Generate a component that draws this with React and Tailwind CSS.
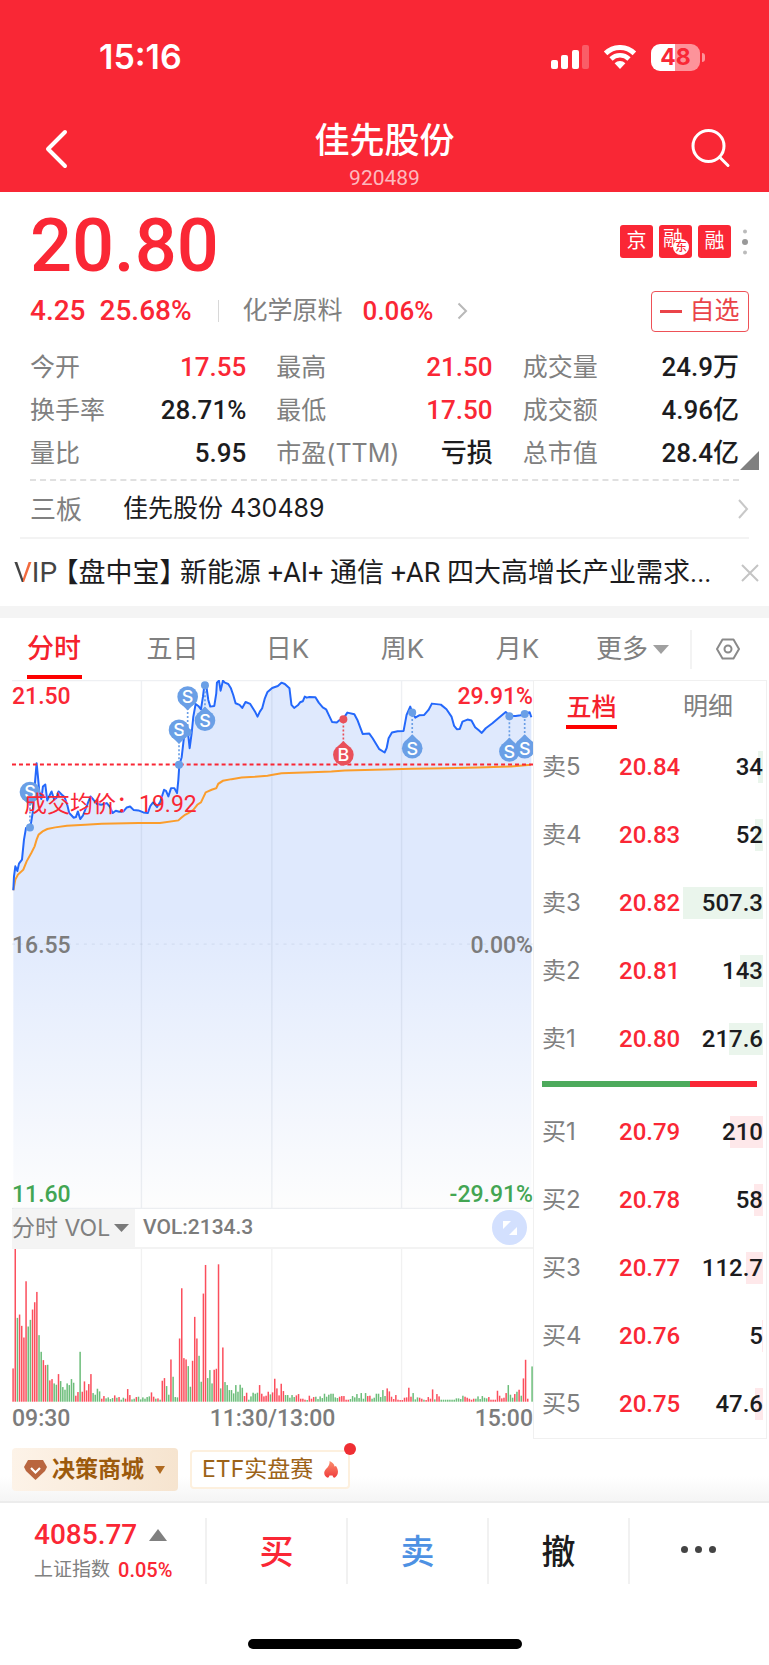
import React from "react";

const num = "font-['Roboto','Noto_Sans_CJK_SC',sans-serif] font-medium";

const stats = [
  { label: "今开", value: "17.55", color: "text-[#fa2735]" },
  { label: "最高", value: "21.50", color: "text-[#fa2735]" },
  { label: "成交量", value: "24.9万", color: "text-[#1c1c1e]" },
  { label: "换手率", value: "28.71%", color: "text-[#1c1c1e]" },
  { label: "最低", value: "17.50", color: "text-[#fa2735]" },
  { label: "成交额", value: "4.96亿", color: "text-[#1c1c1e]" },
  { label: "量比", value: "5.95", color: "text-[#1c1c1e]" },
  { label: "市盈(TTM)", value: "亏损", color: "text-[#1c1c1e]" },
  { label: "总市值", value: "28.4亿", color: "text-[#1c1c1e]" },
];

const periods = ["分时", "五日", "日K", "周K", "月K"];

const sells = [
  { label: "卖5", price: "20.84", qty: "34", bar: 5 },
  { label: "卖4", price: "20.83", qty: "52", bar: 8 },
  { label: "卖3", price: "20.82", qty: "507.3", bar: 80 },
  { label: "卖2", price: "20.81", qty: "143", bar: 23 },
  { label: "卖1", price: "20.80", qty: "217.6", bar: 34 },
];

const buys = [
  { label: "买1", price: "20.79", qty: "210", bar: 33 },
  { label: "买2", price: "20.78", qty: "58", bar: 9 },
  { label: "买3", price: "20.77", qty: "112.7", bar: 17 },
  { label: "买4", price: "20.76", qty: "5", bar: 1 },
  { label: "买5", price: "20.75", qty: "47.6", bar: 8 },
];

const priceLine =
  "4,632 6,590 10,560 16,574 21,552 30,540 36,480 42,445 55,443 62,400 68,320 74,250 78,290 82,335 88,358 93,320 100,314 106,362 114,345 119,335 127,360 133,355 140,335 150,345 158,352 166,375 172,400 180,408 185,414 192,412 198,395 205,418 213,408 222,385 230,365 236,350 245,360 255,372 268,375 285,370 295,382 302,400 312,393 322,396 335,395 345,383 355,380 366,391 380,392 395,398 408,400 416,378 424,368 436,382 446,365 457,330 463,333 470,350 478,325 488,325 496,340 500,300 503,255 510,232 516,180 520,150 528,150 534,205 540,160 545,110 552,72 560,78 568,88 574,50 578,18 584,18 590,60 596,80 608,78 614,40 616,8 622,2 627,32 634,2 640,8 650,12 658,25 665,45 672,70 684,75 692,84 702,66 716,72 726,88 732,98 738,110 745,95 752,85 760,55 768,36 782,24 799,18 810,8 820,12 834,25 840,75 848,84 859,76 866,67 874,64 880,50 886,53 894,51 912,52 922,68 934,82 944,88 952,105 962,126 976,128 984,121 996,116 1008,98 1029,103 1039,122 1054,162 1074,161 1084,175 1104,208 1120,218 1126,205 1132,175 1142,158 1159,154 1177,153 1186,105 1197,80 1204,100 1212,113 1224,106 1239,105 1252,90 1262,71 1289,74 1306,88 1321,110 1329,138 1337,148 1346,147 1354,125 1369,119 1381,122 1392,142 1404,152 1412,159 1424,145 1444,130 1459,117 1484,96 1496,108 1514,108 1529,106 1541,102 1556,97 1561,112";

const averageLine =
  "4,632 10,600 18,585 34,570 44,545 58,520 68,500 74,480 80,465 92,455 106,448 130,443 165,438 220,435 270,432 380,430 445,430 500,422 508,415 520,405 530,400 545,390 557,375 568,368 574,355 582,338 600,330 614,325 620,312 634,303 660,298 690,293 730,291 768,288 784,285 810,280 900,277 960,275 1000,272 1120,269 1200,267 1300,265 1400,263 1500,260 1560,255";

// y is the badge, dot is the trade on the price line
const trades = [
  { type: "S", x: 54, y: 337, dot: 443 },
  { type: "S", x: 502, y: 150, dot: 255 },
  { type: "S", x: 528, y: 50, dot: 157 },
  { type: "S", x: 580, y: 122, dot: 16 },
  { type: "B", x: 996, y: 225, dot: 118 },
  { type: "S", x: 1203, y: 205, dot: 98 },
  { type: "S", x: 1495, y: 215, dot: 109 },
  { type: "S", x: 1541, y: 205, dot: 102 },
];

// one entry per minute, negative means the price fell
const volumes = [
  100, 459, -252, 262, 228, 193, 362, -226, -246, 277, 299, 330, -200, -150,
  125, 110, -111, 64, 68, -55, -51, 83, -62, -44, -36, -55, -50, -68, -57, 18,
  29, -150, 30, 61, 34, 53, 83, -26, -21, -39, -31, 9, 17, -10, -13, -8, -11,
  19, -12, 14, -6, -12, 9, 38, 20, -7, -9, 14, -15, -7, -13, -9, -14, -16, 28,
  15, -9, 10, -6, 63, 71, -47, -21, 127, -75, -14, -13, 190, 341, 131, 127,
  -107, -45, 123, 255, 190, -138, -60, 325, 411, -71, -95, -55, 96, 99, 413,
  -40, 163, -59, -50, -35, -35, -25, -50, -30, -51, -42, 17, 27, -6, -16, -27,
  -24, -27, 50, 24, 16, 18, 30, -22, 28, 69, 40, 19, 54, 32, -20, -20, -12,
  -20, -14, 19, 23, 9, 9, 6, -5, 18, 9, 14, -15, -8, -16, -11, -24, -15, -21,
  -24, -24, -13, -11, 15, 17, 17, 6, 6, -8, -17, -13, -23, -11, -26, -9, -26,
  17, 18, -9, -12, -24, -24, -14, -35, -17, 40, 31, 15, 8, 20, 6, 5, 5, 12, 13,
  42, 15, -26, -7, -13, 12, 9, -6, 5, 14, 9, 37, -7, 23, 16, -6, -6, -6, -6,
  -6, -6, -6, -10, -10, -8, -18, 15, 12, 9, 6, 9, -9, -16, -8, -17, -12, -10,
  14, 6, 6, 6, 33, 18, 10, 12, 26, -50, -21, -12, 23, -30, 36, -18, 70, 126, 9,
  0, -106,
];

const StatusBar = () => (
  <div className="flex items-center justify-between pt-[36px] pl-[99px] pr-[64px]">
    <span className="text-[34px] leading-[42px] font-semibold">15:16</span>
    <div className="flex items-center gap-[14px]">
      <svg width="38" height="24" viewBox="0 0 38 24" fill="#fff">
        <rect x="0" y="15" width="7" height="9" rx="2" />
        <rect x="10" y="10" width="7" height="14" rx="2" />
        <rect x="21" y="5" width="7" height="19" rx="2" />
        <rect x="31" y="0" width="7" height="24" rx="2" opacity="0.25" />
      </svg>
      <svg width="34" height="24" viewBox="0 0 34 24" fill="none">
        <path
          d="M2.6 8.4a20.5 20.5 0 0 1 28.8 0"
          stroke="#fff"
          strokeWidth="5"
        />
        <path
          d="M8 14a12.8 12.8 0 0 1 18 0"
          stroke="#fff"
          strokeWidth="4.6"
        />
        <path d="M11.6 18.2a7.6 7.6 0 0 1 10.8 0L17 24z" fill="#fff" />
      </svg>
      <div className="flex items-center gap-[2px]">
        <div className="flex h-[27px] w-[49px] items-center justify-center rounded-[9px] bg-linear-to-r from-white from-48% to-[#fd939a] to-48% text-[23px] leading-[27px] font-bold text-[#f92735]">
          48
        </div>
        <div className="h-[9px] w-[3px] rounded-r-full bg-[#fd939a]" />
      </div>
    </div>
  </div>
);

const Header = () => (
  <header className="h-[192px] bg-[#f92735] text-white">
    <StatusBar />
    <div className="mt-[38px] flex items-start justify-between pl-[44px] pr-[38px]">
      <button type="button" aria-label="返回" className="mt-[13px] w-[34px]">
        <svg width="24" height="40" viewBox="0 0 24 40" fill="none">
          <path
            d="M21 3L4 20l17 17"
            stroke="#fff"
            strokeWidth="4"
            strokeLinecap="round"
            strokeLinejoin="round"
          />
        </svg>
      </button>
      <div className="flex flex-col items-center">
        <h1 className="text-[35px] leading-[48px] font-medium">佳先股份</h1>
        <span className="font-['Roboto',sans-serif] text-[21px] leading-[28px] text-[#fdb9be]">
          920489
        </span>
      </div>
      <button type="button" aria-label="搜索" className="mt-[12px]">
        <svg width="40" height="40" viewBox="0 0 40 40" fill="none" stroke="#fff" strokeWidth="3">
          <circle cx="17.500" cy="18" r="15.500" />
          <path d="M28.500 29l8.500 8.500" strokeLinecap="round" />
        </svg>
      </button>
    </div>
  </header>
);

const Quote = () => (
  <section className="pl-[30px] pr-[20px]">
    <div className="flex items-start justify-between">
      <div className={`${num} mt-[12px] text-[74px] leading-[84px] text-[#fa2735]`}>
        20.80
      </div>
      <div className="mt-[33px] mr-px flex items-center gap-[6px] text-[20px] leading-[33px] text-white">
        <span className="flex h-[33px] w-[33px] items-center justify-center rounded-[3px] bg-[#fa2735]">
          京
        </span>
        <span className="relative flex h-[33px] w-[33px] justify-start rounded-[3px] bg-[#fa2735] pl-[4px] leading-[28px]">
          融
          <span className="absolute right-[3px] bottom-[3px] flex h-4 w-4 items-center justify-center rounded-full bg-white text-[12px] leading-4 font-medium text-[#fa2735]">
            东
          </span>
        </span>
        <span className="flex h-[33px] w-[33px] items-center justify-center rounded-[3px] bg-[#fa2735]">
          融
        </span>
        <button type="button" aria-label="更多标签" className="pl-[5px]">
          <svg width="6" height="26" viewBox="0 0 6 26" fill="#999">
            <circle cx="3" cy="2.5" r="2" fill="#bbb" />
            <circle cx="3" cy="13" r="3" />
            <circle cx="3" cy="23.5" r="2" fill="#bbb" />
          </svg>
        </button>
      </div>
    </div>

    <div className="flex h-[46px] items-center">
      <span className={`${num} text-[28px] text-[#fa2735]`}>4.25</span>
      <span className={`${num} ml-[14px] text-[28px] text-[#fa2735]`}>
        25.68%
      </span>
      <span className="ml-[26px] h-[22px] w-px bg-[#d8d8d8]" />
      <a href="#sector" className="ml-[24px] flex items-center">
        <span className="text-[25px] text-[#808080]">化学原料</span>
        <span className={`${num} ml-[20px] text-[26px] text-[#fa2735]`}>
          0.06%
        </span>
        <svg className="ml-[24px]" width="11" height="18" viewBox="0 0 11 18" fill="none">
          <path d="M1.5 1.5L9 9l-7.500 7.500" stroke="#b8b8b8" strokeWidth="2" />
        </svg>
      </a>
      <button
        type="button"
        className="ml-auto flex h-[41px] w-[98px] items-center justify-center gap-[7px] rounded-[4px] border-[1px] border-[#ee5157] text-[25px] text-[#ea4449]"
      >
        <span className="h-[3px] w-[22px] bg-[#ea4449]" />
        自选
      </button>
    </div>

    <div className="relative mt-[12px] pr-[10px]">
      <dl className="grid grid-cols-3 gap-x-[30px] border-b-2 border-dashed border-[#e0e0e0] pb-[4px]">
        {stats.map((item) => (
          <div key={item.label} className="flex h-[43px] items-center justify-between">
            <dt className="text-[25px] text-[#808080]">{item.label}</dt>
            <dd className={`${num} text-[26px] ${item.color}`}>{item.value}</dd>
          </div>
        ))}
      </dl>
      <svg
        className="absolute right-[-10px] bottom-[11px]"
        width="19"
        height="19"
        viewBox="0 0 19 19"
        fill="#808080"
      >
        <path d="M19 0v19H0z" />
      </svg>
    </div>
  </section>
);

const Notices = () => (
  <section>
    <a
      href="#neeq"
      className="ml-[20px] mr-[20px] flex h-[58px] items-center border-b-2 border-[#f3f3f3] pl-[10px] text-[25px] text-[#1c1c1e]"
    >
      <span className="w-[93px] text-[26px] text-[#808080]">三板</span>
      <span className="flex-1">佳先股份 430489</span>
      <svg width="12" height="20" viewBox="0 0 12 20" fill="none">
        <path d="M2 1l8 9-8 9" stroke="#c8c8c8" strokeWidth="2" />
      </svg>
    </a>
    <div className="flex h-[67px] items-center pl-[14px] pr-[10px]">
      <a
        href="#vip"
        className="flex min-w-0 flex-1 items-center font-['Roboto','Noto_Sans_CJK_SC',sans-serif] text-[#1c1c1e]"
      >
        <span className="text-[28px] text-[#444]">
          <span className="bg-linear-to-r from-[#444] from-50% to-[#f26a3d] to-50% bg-clip-text text-transparent">
            V
          </span>
          IP
        </span>
        <span className="ml-[8px] text-[27px] leading-[40px] whitespace-nowrap">
          <span className="mr-[7px] [font-feature-settings:'halt']">【盘中宝】</span>
          新能源 +AI+ 通信 +AR 四大高增长产业需求...
        </span>
      </a>
      <button type="button" aria-label="关闭" className="shrink-0">
        <svg width="18" height="18" viewBox="0 0 18 18">
          <path d="M1 1l16 16M17 1L1 17" stroke="#c4c4c4" strokeWidth="2" />
        </svg>
      </button>
    </div>
  </section>
);

const PeriodTabs = () => (
  <nav className="flex h-[62px] items-center border-t-12 border-[#f4f4f4] box-content">
    <div className="grid h-full flex-1 grid-cols-6">
      {periods.map((name, i) => (
        <button
          key={name}
          type="button"
          className={
            i === 0
              ? "flex flex-col items-center justify-between pr-[7px] pt-[10px] text-[27px] leading-[42px] font-medium text-[#f5222d]"
              : "flex flex-col items-center pt-[10px] text-[26px] leading-[42px] text-[#808080]"
          }
        >
          {name}
          {i === 0 && <span className="mb-px h-[4px] w-[55px] bg-[#fd0100]" />}
        </button>
      ))}
      <button
        type="button"
        className="flex items-start justify-center gap-[5px] pt-[10px] text-[26px] leading-[42px] text-[#808080]"
      >
        更多
        <svg className="mt-[17px]" width="16" height="9" viewBox="0 0 16 9" fill="#a0a0a0">
          <path d="M0 0h16L8 9z" />
        </svg>
      </button>
    </div>
    <button
      type="button"
      aria-label="设置"
      className="flex h-[39px] w-[79px] items-center justify-center border-l-2 border-[#f3f3f3] pr-[5px]"
    >
      <svg width="24" height="22" viewBox="0 0 24 22" fill="none" stroke="#8a8a8a" strokeWidth="2">
        <path d="M6.500 1.500h11L23 11l-5.500 9.500h-11L1 11z" strokeLinejoin="round" />
        <circle cx="12" cy="11" r="3.500" />
      </svg>
    </button>
  </nav>
);

const TradeMark = ({ type, x, y, dot }) => {
  const color = type === "B" ? "#e9505a" : "#6a9fe6";
  const down = dot > y;
  return (
    <g>
      <line
        x1={x}
        y1={down ? y + 34 : y - 34}
        x2={x}
        y2={dot}
        stroke={color}
        strokeWidth="5"
        strokeDasharray="6 6"
      />
      <circle cx={x} cy={dot} r="12" fill={color} />
      <path
        d={
          down
            ? `M${x - 18} ${y + 24}L${x} ${y + 42}L${x + 18} ${y + 24}z`
            : `M${x - 18} ${y - 24}L${x} ${y - 42}L${x + 18} ${y - 24}z`
        }
        fill={color}
      />
      <circle cx={x} cy={y} r="31" fill={color} />
      <text
        x={x}
        y={y + 19}
        textAnchor="middle"
        fontSize="54"
        fontWeight="500"
        fill="#fff"
      >
        {type}
      </text>
    </g>
  );
};

const PriceChart = () => (
  <div className="relative">
    <svg className="block h-auto w-full" viewBox="0 0 1566 1590">
      <defs>
        <linearGradient id="priceFill" x1="0" y1="0" x2="0" y2="1">
          <stop offset="0" stopColor="#dfe9fd" />
          <stop offset="0.45" stopColor="#dfe9fd" />
          <stop offset="1" stopColor="#fdfdfd" />
        </linearGradient>
      </defs>
      <polygon points={`4,1590 ${priceLine} 1561,1590`} fill="url(#priceFill)" />
      <g stroke="#5a6b8c" strokeOpacity="0.1" strokeWidth="4">
        <path d="M0 2H1566M389 0V1590M781 0V1590M1171 0V1590M0 1588H1566" />
        <path d="M0 794H1566" strokeDasharray="9 15" />
      </g>
      <polyline points={averageLine} fill="none" stroke="#fb9d2c" strokeWidth="6" />
      <polyline
        points={priceLine}
        fill="none"
        stroke="#2468fb"
        strokeWidth="6"
        strokeLinejoin="round"
      />
      <path d="M0 254H1566" stroke="#f92735" strokeWidth="6" strokeDasharray="12 9" />
      {trades.map((trade) => (
        <TradeMark key={trade.x} {...trade} />
      ))}
    </svg>
    <div className={`${num} absolute inset-0 text-[23px] leading-[28px]`}>
      <div className="flex h-full flex-col justify-between pt-[3px]">
        <div className="flex justify-between text-[#fa2735]">
          <span>21.50</span>
          <span>29.91%</span>
        </div>
        <div className="flex justify-between text-[#7c7c7c]">
          <span>16.55</span>
          <span>0.00%</span>
        </div>
        <div className="flex justify-between text-[#43a553]">
          <span>11.60</span>
          <span>-29.91%</span>
        </div>
      </div>
    </div>
    <div className="absolute top-[109px] left-[12px] font-['Roboto','Noto_Sans_CJK_SC',sans-serif] text-[23px] leading-[32px] text-[#f92735]">
      成交均价：19.92
    </div>
  </div>
);

const VolumeChart = () => (
  <div>
    <div className="flex h-[40px] items-center border-b-2 border-[#f3f3f3]">
      <button
        type="button"
        className="flex h-[40px] w-[123px] items-center justify-between bg-[#f4f4f4] pr-[6px] text-[23px] text-[#808080]"
      >
        分时 VOL
        <svg width="15" height="8" viewBox="0 0 15 8" fill="#7a7a7a">
          <path d="M0 0h15L7.500 8z" />
        </svg>
      </button>
      <span className={`${num} ml-[8px] text-[21px] text-[#7c7c7c]`}>VOL:2134.3</span>
      <button
        type="button"
        aria-label="全屏"
        className="mr-[6px] ml-auto flex h-[35px] w-[35px] items-center justify-center rounded-full bg-[#d3e0fe]"
      >
        <svg width="14" height="14" viewBox="0 0 14 14" fill="#fff">
          <path d="M0 0h8L0 8zM14 14H6l8-8z" />
        </svg>
      </button>
    </div>
    <svg className="block h-auto w-full" viewBox="0 0 1566 459">
      <path d="M389 0V459M781 0V459M1171 0V459" stroke="#f1f1f1" strokeWidth="4" />
      {volumes.map((v, i) => (
        <rect
          key={i}
          x={i * 6.5 + 1}
          y={459 - Math.abs(v)}
          width="4.5"
          height={Math.abs(v)}
          fill={v > 0 ? "#fb4f5d" : "#6cbd7a"}
        />
      ))}
    </svg>
    <div className={`${num} flex justify-between text-[23px] leading-[34px] text-[#7c7c7c]`}>
      <span>09:30</span>
      <span>11:30/13:00</span>
      <span>15:00</span>
    </div>
  </div>
);

const DepthTable = ({ rows, label, barClass }) => (
  <table aria-label={label} className="w-full">
    <tbody>
      {rows.map((row) => (
        <tr key={row.label} className="h-[68px]">
          <th scope="row" className="w-[85px] pl-[8px] text-left text-[24px] font-normal text-[#808080]">
            {row.label}
          </th>
          <td className={`${num} text-[24px] text-[#fa2735]`}>{row.price}</td>
          <td className={`${num} pr-[3px] text-right text-[24px] text-[#1c1c1e]`}>
            <div className="relative flex h-[32px] items-center justify-end">
              <span
                className={`absolute inset-y-0 right-0 ${barClass}`}
                style={{ width: row.bar }}
              />
              <span className="relative">{row.qty}</span>
            </div>
          </td>
        </tr>
      ))}
    </tbody>
  </table>
);

const OrderBook = () => (
  <section className="mr-[2px] border border-[#f0f0f0]">
    <div className="flex h-[52px] justify-between pl-[32px] pr-[33px] text-[25px] leading-[36px]">
      <button
        type="button"
        className="flex flex-col items-center justify-between pt-[8px] pb-[4px] font-medium text-[#f5222d]"
      >
        五档
        <span className="h-[4px] w-[51px] shrink-0 bg-[#fd0100]" />
      </button>
      <button type="button" className="flex flex-col pt-[7px] text-[#808080]">
        明细
      </button>
    </div>
    <DepthTable rows={sells} label="卖盘" barClass="bg-[#eaf5ec]" />
    <div className="mt-[8px] mb-[11px] ml-[8px] mr-[9px] flex h-[6px]">
      <span className="bg-[#4daa5c]" style={{ width: "69%" }} />
      <span className="flex-1 bg-[#fa2735]" />
    </div>
    <DepthTable rows={buys} label="买盘" barClass="bg-[#fee8ea]" />
  </section>
);

const Promotions = () => (
  <section className="flex h-[62px] items-start gap-[12px] bg-linear-to-b from-white from-60% to-[#f5f5f5] pt-[9px] pl-[12px]">
    <button
      type="button"
      className="flex h-[43px] w-[166px] items-center rounded-[4px] bg-linear-to-r from-[#fdf3e8] to-[#f6e4cf] pl-[12px] text-[23px] font-bold text-[#9c5a0c]"
    >
      <svg width="23" height="20" viewBox="0 0 23 20" fill="none">
        <path d="M4 0h15l4 7-2 4-9.500 9L2 11 0 7z" fill="#b9663f" />
        <path d="M7 8l4.500 4.500L16 8" stroke="#fff" strokeWidth="2.200" />
      </svg>
      <span className="ml-[5px]">决策商城</span>
      <svg className="ml-[11px]" width="10" height="8" viewBox="0 0 10 8" fill="#b06a20">
        <path d="M0 0h10L5 8z" />
      </svg>
    </button>
    <button
      type="button"
      className="relative mt-[2px] flex h-[39px] w-[160px] items-center rounded-[4px] border-2 border-[#fdf0de] bg-white pl-[10px] text-[23px] text-[#9c6318]"
    >
      ETF实盘赛
      <svg className="ml-[11px]" width="14" height="17" viewBox="0 0 14 17">
        <defs>
          <linearGradient id="flame" x1="0" y1="0" x2="0" y2="1">
            <stop offset="0" stopColor="#fb8f6e" />
            <stop offset="1" stopColor="#f03c3c" />
          </linearGradient>
        </defs>
        <path
          d="M5.500 0c2.500 1 5 3 5 5.500l1.500-.5c3 4.500 2.500 9-1 11.500-1.500.5-2-.5-2.500-2h-3c-.5 1.500-1 2.500-2.500 2C-.5 14.500-.5 10.500 2 8 4.500 5.500 6 3 5.500 0z"
          fill="url(#flame)"
        />
      </svg>
      <span className="absolute top-[-9px] right-[-8px] h-[12px] w-[12px] rounded-full bg-[#ef2e33]" />
    </button>
  </section>
);

const BottomBar = () => (
  <footer className="border-t-2 border-[#ececec] bg-white pt-[15px]">
    <div className="grid h-[66px] grid-cols-[205px_repeat(4,1fr)]">
      <a href="#index" className="flex flex-col justify-between pl-[34px]">
        <span className={`${num} flex items-center gap-[12px] text-[28px] leading-[34px] text-[#fa2735]`}>
          4085.77
          <svg width="18" height="12" viewBox="0 0 18 12" fill="#808080">
            <path d="M9 0l9 12H0z" />
          </svg>
        </span>
        <span className="flex items-center gap-[8px] text-[19px] leading-[28px] text-[#808080]">
          上证指数
          <span className={`${num} text-[20px] text-[#fa2735]`}>0.05%</span>
        </span>
      </a>
      <button type="button" className="border-l-2 border-[#f1f1f1] text-[34px] font-medium text-[#fa2735]">
        买
      </button>
      <button type="button" className="border-l-2 border-[#f1f1f1] text-[34px] font-medium text-[#4d91e3]">
        卖
      </button>
      <button type="button" className="border-l-2 border-[#f1f1f1] text-[34px] font-medium text-[#1c1c1e]">
        撤
      </button>
      <button
        type="button"
        aria-label="更多"
        className="flex items-center justify-center gap-[7px] border-l-2 border-[#f1f1f1] pr-[3px] pb-[4px]"
      >
        <span className="h-[7px] w-[7px] rounded-full bg-[#444]" />
        <span className="h-[7px] w-[7px] rounded-full bg-[#444]" />
        <span className="h-[7px] w-[7px] rounded-full bg-[#444]" />
      </button>
    </div>
    <div className="mx-auto mt-[55px] mb-[16px] h-[10px] w-[274px] rounded-full bg-black" />
  </footer>
);

const App = () => {
  return (
    <div className="bg-white font-['Inter','Noto_Sans_CJK_SC',sans-serif]">
      <Header />
      <Quote />
      <Notices />
      <PeriodTabs />
      <main className="grid grid-cols-[1fr_236px] pl-[12px]">
        <div>
          <PriceChart />
          <VolumeChart />
        </div>
        <OrderBook />
      </main>
      <Promotions />
      <BottomBar />
    </div>
  );
};

export default App;
